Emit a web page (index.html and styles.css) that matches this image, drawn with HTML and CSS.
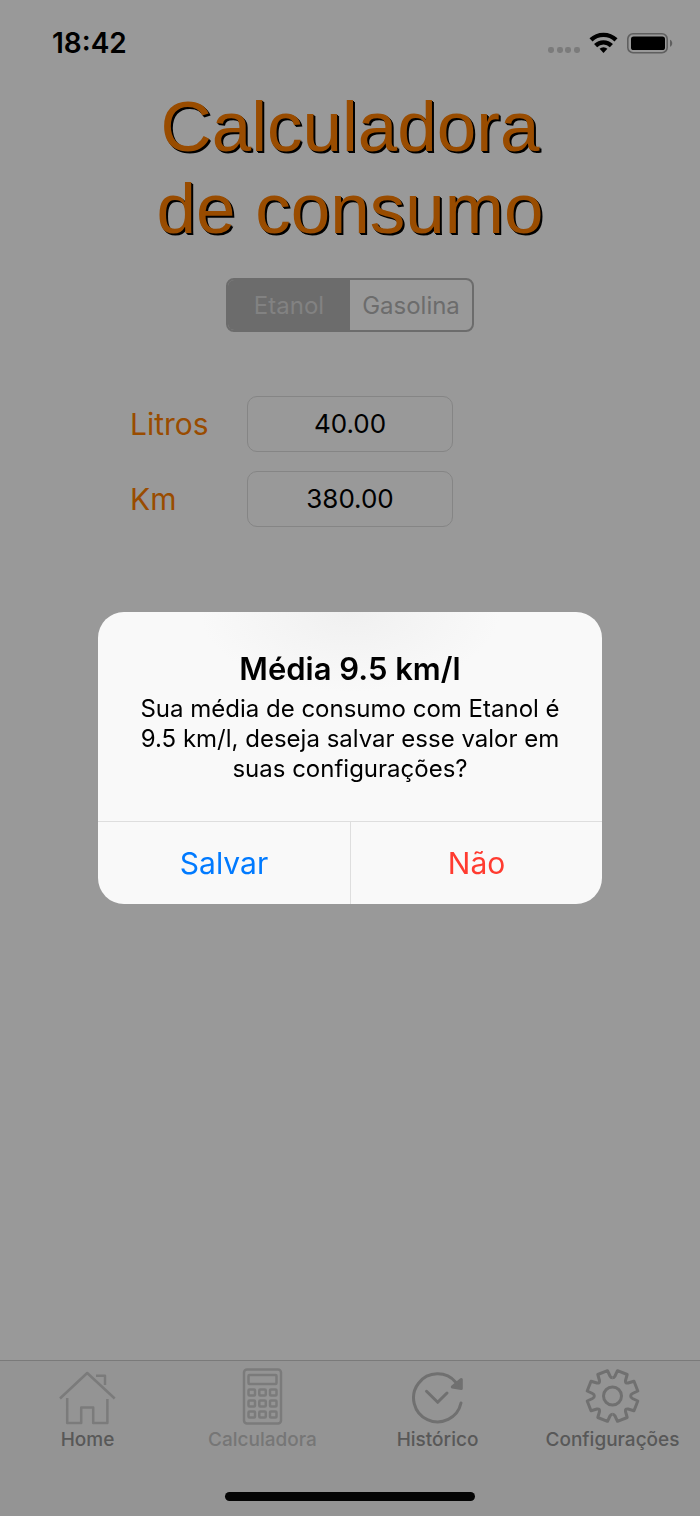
FILE: index.html
```html
<!DOCTYPE html>
<html lang="pt-BR">
<head>
<meta charset="utf-8">
<meta name="viewport" content="width=device-width, initial-scale=1">
<title>Calculadora de consumo</title>
<link rel="stylesheet" href="styles.css">
</head>
<body>
<header class="status">
  <time class="status-time">18:42</time>
  <svg class="status-icons" width="126" height="26" viewBox="0 0 126 26" aria-hidden="true">
    <g fill="#7b7b7b">
      <rect x="0" y="17" width="6" height="6" rx="2.4"/><rect x="9" y="17" width="6" height="6" rx="2.4"/>
      <rect x="17" y="17" width="6" height="6" rx="2.4"/><rect x="26" y="17" width="6" height="6" rx="2.4"/>
    </g>
    <g fill="none" stroke="#000" stroke-width="4.4">
      <path d="M43 9.800a18.200 18.200 0 0 1 25 0"/>
      <path d="M47.600 15.600a11.200 11.200 0 0 1 15.800 0"/>
    </g>
    <path d="M51.600 18.800a5.600 5.600 0 0 1 7.800 0L55.500 22.900z" fill="#000"/>
    <rect x="79.800" y="3.800" width="39.400" height="18.900" rx="5.200" fill="none" stroke="#5f5f5f" stroke-width="1.600"/>
    <rect x="83" y="6.500" width="34" height="13.500" rx="2.600" fill="#000"/>
    <path d="M122 9.800c3 1.300 3 5.700 0 7z" fill="#5f5f5f"/>
  </svg>
</header>

<main class="screen">
  <h1 class="title">Calculadora<br>de consumo</h1>
  <div class="segments" role="group" aria-label="Combustível">
    <button class="segment segment-on" type="button" aria-pressed="true">Etanol</button>
    <button class="segment" type="button" aria-pressed="false">Gasolina</button>
  </div>
  <form class="form">
    <label class="label" for="litros">Litros</label>
    <input class="field" id="litros" type="text" inputmode="decimal" value="40.00">
    <label class="label" for="km">Km</label>
    <input class="field" id="km" type="text" inputmode="decimal" value="380.00">
  </form>
</main>

<footer class="bottom">
  <nav class="tabs">
    <a class="tab" href="#home">
      <svg class="icon icon-thin" viewBox="0 0 60 58" aria-hidden="true">
        <path d="M2 30.500 29.200 5l27.500 25.500M38 7.700h9V17M9.200 30v25h14V39.500h12V55h14.200V31"/>
      </svg>
      Home
    </a>
    <a class="tab tab-on" href="#calculadora" aria-current="page">
      <svg class="icon icon-thin" viewBox="0 0 60 58" aria-hidden="true">
        <rect x="11" y="1.500" width="37" height="54" rx="3"/>
        <rect x="15.500" y="7" width="28" height="9" rx="1"/>
        <g id="keys">
          <rect x="15.500" y="21.500" width="6.500" height="6" rx="1"/><rect x="26.300" y="21.500" width="6.500" height="6" rx="1"/><rect x="37" y="21.500" width="6.500" height="6" rx="1"/>
        </g>
        <use href="#keys" y="11"/>
        <use href="#keys" y="22"/>
      </svg>
      Calculadora
    </a>
    <a class="tab" href="#historico">
      <svg class="icon" viewBox="0 0 60 58" aria-hidden="true">
        <path d="M53 35A24 24 0 1 1 48 14.500" stroke-linecap="round"/>
        <path class="solid" d="M53.300 11.500v9l-9-1.500z"/>
        <path d="M18.500 23.300 29.700 34.300 39 25" stroke-linecap="round"/>
      </svg>
      Histórico
    </a>
    <a class="tab" href="#configuracoes">
      <svg class="icon" viewBox="-29.500 -28 60 58" aria-hidden="true">
        <path id="teeth" d="M0-18.200Q1.600-18.200 2.500-20L5-25.300 14.700-21.500 13-15.500Q12.500-12.500 15.500-13L21.500-14.700 25.300-5 20-2.500Q18.200-1.600 18.200 0"/>
        <use href="#teeth" transform="rotate(90)"/>
        <use href="#teeth" transform="rotate(180)"/>
        <use href="#teeth" transform="rotate(270)"/>
        <circle r="9"/>
      </svg>
      Configurações
    </a>
  </nav>
  <div class="home-bar"></div>
</footer>

<div class="overlay">
  <section class="alert" role="alertdialog" aria-modal="true" aria-labelledby="alert-title" aria-describedby="alert-text">
    <div class="alert-body">
      <h2 class="alert-title" id="alert-title">Média 9.5 km/l</h2>
      <p class="alert-text" id="alert-text">Sua média de consumo com Etanol é<br>9.5 km/l, deseja salvar esse valor em<br>suas configurações?</p>
    </div>
    <div class="alert-actions">
      <button class="action" type="button">Salvar</button>
      <button class="action action-danger" type="button">Não</button>
    </div>
  </section>
</div>
</body>
</html>
```

FILE: styles.css
```css
* {
  box-sizing: border-box;
}

body {
  margin: 0;
  min-height: 100vh;
  display: flex;
  flex-direction: column;
  background: #999;
  color: #000;
  font-family: Inter, "Liberation Sans", sans-serif;
}

button,
input {
  font-family: inherit;
}

.status {
  display: flex;
  justify-content: space-between;
  align-items: center;
  height: 86px;
  padding: 0 26px 0 52px;
}

.status-time {
  font-size: 28px;
  font-weight: 600;
}

.screen {
  flex: 1;
  display: flex;
  flex-direction: column;
  align-items: center;
}

.title {
  margin: 0 0 28px;
  font-family: "Liberation Sans", Arial, sans-serif;
  font-size: 71px;
  font-weight: 400;
  line-height: 82px;
  text-align: center;
  color: #994c00;
  text-shadow: 1px 1px 0 #000, 2px 2px 0 #000;
}

.segments {
  display: grid;
  grid-template-columns: 1fr 1fr;
  width: 248px;
  height: 54px;
  border: 2px solid #6c6c6c;
  border-radius: 8px;
  overflow: hidden;
}

.segment {
  padding: 0;
  border: 0;
  background: none;
  color: #6c6c6c;
  font-size: 24px;
}

.segment-on {
  background: #6c6c6c;
  color: #828282;
}

.form {
  display: grid;
  grid-template-columns: 117px 206px 117px;
  row-gap: 19px;
  align-items: center;
  margin-top: 64px;
}

.label {
  grid-column: 1;
  font-size: 30px;
  color: #994c00;
}

.field {
  grid-column: 2;
  width: 100%;
  height: 56px;
  padding: 0 12px 2px;
  border: 1px solid #858585;
  border-radius: 10px;
  background: none;
  color: #000;
  font-size: 26px;
  text-align: center;
}

.bottom {
  display: flex;
  flex-direction: column;
  align-items: center;
  border-top: 1px solid #7a7a7a;
  background: #949494;
}

.tabs {
  display: grid;
  grid-template-columns: repeat(4, 1fr);
  width: 100%;
  padding-top: 7px;
}

.tab {
  display: flex;
  flex-direction: column;
  align-items: center;
  gap: 2px;
  color: #585858;
  font-size: 19px;
  font-weight: 500;
  line-height: 24px;
  text-decoration: none;
}

.tab-on {
  color: #767676;
}

.icon {
  width: 60px;
  height: 58px;
  fill: none;
  stroke: #707070;
  stroke-width: 3;
  stroke-linejoin: round;
}

.icon-thin {
  stroke: #7b7b7b;
  stroke-width: 2.5;
}

.solid {
  fill: #707070;
}

.home-bar {
  width: 250px;
  height: 9px;
  margin: 40px 0 15px;
  border-radius: 5px;
  background: #050505;
}

.overlay {
  position: fixed;
  inset: 0;
  display: grid;
  place-items: center;
}

.alert {
  width: 504px;
  max-width: 100%;
  border-radius: 26px;
  overflow: hidden;
  background: radial-gradient(ellipse 150px 80px at 50% 0, #f0f0f0, #f9f9f9);
}

.alert-body {
  padding: 37px 24px 37px;
  text-align: center;
}

.alert-title {
  margin: 0 0 5px;
  font-size: 31px;
  font-weight: 600;
  line-height: 40px;
}

.alert-text {
  margin: 0;
  font-size: 24px;
  line-height: 30px;
}

.alert-actions {
  display: grid;
  grid-template-columns: 1fr 1fr;
  border-top: 1px solid #dedede;
}

.action {
  height: 82px;
  padding: 0;
  border: 0;
  background: none;
  color: #007aff;
  font-size: 30px;
}

.action-danger {
  border-left: 1px solid #dedede;
  color: #ff3b30;
}
```
